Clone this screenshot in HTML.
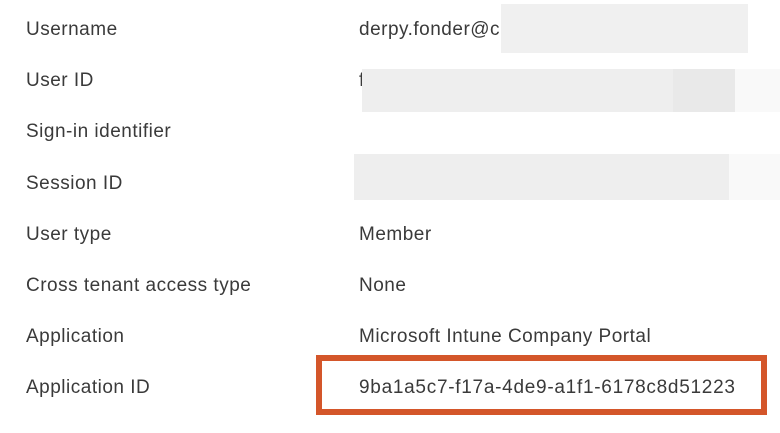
<!DOCTYPE html>
<html><head><style>
body{margin:0;width:780px;height:433px;background:#fff;position:relative;overflow:hidden;font-family:"Liberation Sans",sans-serif;font-size:19px;letter-spacing:0.5px;color:#3a3a3a}
.l,.v{position:absolute;line-height:20px;white-space:nowrap}
.l{left:26px}.v{left:359px}
.b{position:absolute}
</style></head><body>
<div class="l" style="top:20px">Username</div>
<div class="l" style="top:71px">User ID</div>
<div class="l" style="top:122px">Sign-in identifier</div>
<div class="l" style="top:174px">Session ID</div>
<div class="l" style="top:225px">User type</div>
<div class="l" style="top:276px">Cross tenant access type</div>
<div class="l" style="top:327px">Application</div>
<div class="l" style="top:378px">Application ID</div>
<div class="v" style="top:20px">derpy.fonder@c</div>
<div class="v" style="top:71px">f</div>
<div class="v" style="top:225px">Member</div>
<div class="v" style="top:276px">None</div>
<div class="v" style="top:327px">Microsoft Intune Company Portal</div>
<div class="b" style="left:501px;top:4px;width:247px;height:49px;background:#f0f0f0"></div>
<div class="b" style="left:362px;top:69px;width:373px;height:43px;background:#eeeeee"></div>
<div class="b" style="left:673px;top:69px;width:62px;height:43px;background:#e9e9e9"></div>
<div class="b" style="left:735px;top:69px;width:45px;height:43px;background:#f9f9f9"></div>
<div class="b" style="left:354px;top:154px;width:375px;height:46px;background:#eeeeee"></div>
<div class="b" style="left:729px;top:154px;width:51px;height:46px;background:#f9f9f9"></div>
<div class="b" style="left:316px;top:355px;width:439px;height:48px;border:6px solid #d4562a"></div>
<div class="v" style="top:378px;letter-spacing:0.72px">9ba1a5c7-f17a-4de9-a1f1-6178c8d51223</div>
</body></html>
